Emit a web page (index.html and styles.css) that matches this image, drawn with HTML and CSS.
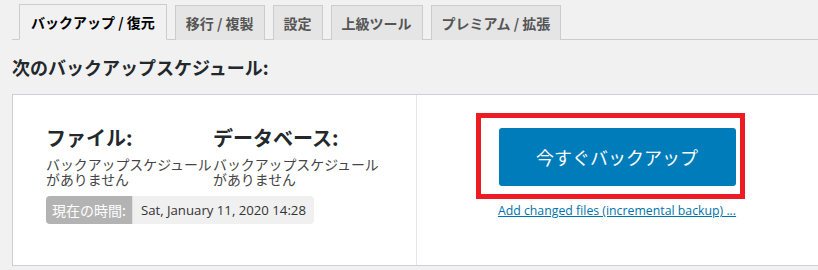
FILE: index.html
```html
<!DOCTYPE html>
<html lang="ja">
<head>
<meta charset="UTF-8">
<title>バックアップ / 復元</title>
<link rel="stylesheet" href="styles.css">
</head>
<body>
<nav class="tabs">
  <a class="tab active">バックアップ / 復元</a>
  <a class="tab">移行 / 複製</a>
  <a class="tab">設定</a>
  <a class="tab">上級ツール</a>
  <a class="tab">プレミアム / 拡張</a>
</nav>

<h2 class="title">次のバックアップスケジュール:</h2>

<div class="panel">
  <div class="schedule">
    <div class="cols">
      <div class="col">
        <h3>ファイル:</h3>
        <p>バックアップスケジュール<br>がありません</p>
      </div>
      <div class="col">
        <h3>データベース:</h3>
        <p>バックアップスケジュール<br>がありません</p>
      </div>
    </div>
    <div class="time">
      <span class="time-label">現在の時間:</span>
      <span class="time-value">Sat, January 11, 2020 14:28</span>
    </div>
  </div>
  <div class="actions">
    <button class="backup-btn">今すぐバックアップ</button>
    <a class="incremental" href="#">Add changed files (incremental backup) ...</a>
    <!-- 赤枠の注釈 -->
    <div class="highlight"></div>
  </div>
</div>
</body>
</html>
```

FILE: styles.css
```css
body {
  margin: 0;
  background-color: #f1f1f1;
  font-family: 'Noto Sans CJK JP', 'Noto Sans', sans-serif;
  color: #444;
  overflow: hidden;
}

/* タブ */
.tabs {
  display: flex;
  align-items: flex-end;
  gap: 8px;
  margin: 4px 0 0 12px;
  padding-left: 7px;
  border-bottom: 1px solid #ccc;
  height: 35px;
}
.tab {
  display: block;
  height: 24px;
  padding: 5px 10px;
  margin-bottom: -1px;
  border: 1px solid #ccc;
  border-bottom: none;
  background: #e5e5e5;
  color: #555;
  font-size: 14px;
  font-weight: 700;
  line-height: 24px;
  text-decoration: none;
}
.tab.active {
  padding: 5px 11px;
  background: #f1f1f1;
  color: #000;
  border-bottom: 1px solid #f1f1f1;
}

.title {
  margin: 15px 0 14px 12px;
  font-size: 18px;
  line-height: 25px;
  font-weight: 700;
  color: #23282d;
}

/* パネル */
.panel {
  display: flex;
  margin-left: 12px;
  width: 840px;
  height: 170px;
  background: #fff;
  border: 1px solid #ccd0d4;
}
.schedule {
  width: 370px;
  padding: 31px 0 0 33px;
  border-right: 1px solid #e5e5e5;
}
.cols {
  display: grid;
  grid-template-columns: 167px 167px;
}
.col h3 {
  margin: 0 0 7px;
  font-size: 20px;
  line-height: 24px;
  font-weight: 700;
  color: #23282d;
}
.col p {
  margin: 0;
  font-size: 13.9px;
  line-height: 14.5px;
  white-space: nowrap;
}
.time {
  display: inline-flex;
  margin-top: 10px;
  height: 28px;
  font-size: 14px;
  line-height: 28px;
  border-radius: 4px;
  overflow: hidden;
}
.time-label {
  background: #b3b3b3;
  color: #fff;
  padding: 0 6px;
  border-right: 1px solid #e0e0e0;
}
.time-value {
  background: #f0f0f0;
  color: #333;
  padding: 0 8px;
  font-family: 'Open Sans', 'Noto Sans', sans-serif;
  font-size: 13.2px;
}

.actions {
  position: relative;
  width: 400px;
  display: flex;
  flex-direction: column;
  align-items: center;
  padding-top: 33px;
}
.backup-btn {
  width: 237px;
  height: 58px;
  border: none;
  border-radius: 3px;
  background: #007cba;
  color: #fff;
  font-family: 'Noto Sans CJK JP', sans-serif;
  font-size: 18px;
  cursor: pointer;
}
.incremental {
  margin-top: 16px;
  font-family: 'Open Sans', sans-serif;
  font-size: 12.3px;
  line-height: 18px;
  color: #0073aa;
}
.highlight {
  position: absolute;
  left: 59px;
  top: 18px;
  width: 259px;
  height: 76px;
  border: 5px solid #ed1c24;
  pointer-events: none;
}
```
